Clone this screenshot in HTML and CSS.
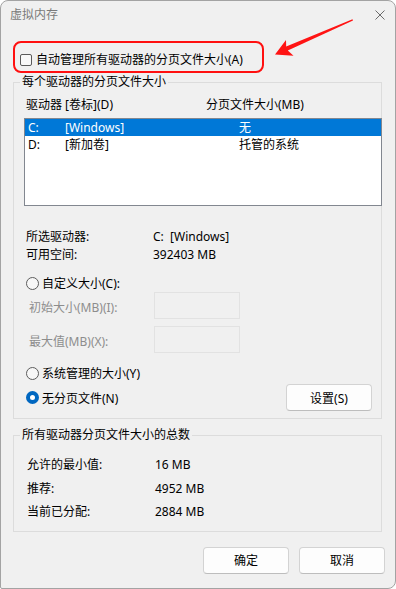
FILE: index.html
```html
<!DOCTYPE html>
<html lang="zh-CN">
<head>
    <meta charset="UTF-8">
    <title>虚拟内存</title>
    <link rel="stylesheet" href="styles.css">
</head>
<body>

    <div class="window">
        <div class="titlebar">
            <span class="title">虚拟内存</span>
            <svg class="close" width="10" height="10" viewBox="0 0 10 10">
                <path d="M0.5 0.5 L9.5 9.5 M9.5 0.5 L0.5 9.5" stroke="#6b6b6b" stroke-width="1" fill="none"/>
            </svg>
        </div>

        <div class="content">
            <div class="highlight">
                <label class="check"><span class="box"></span>自动管理所有驱动器的分页文件大小(A)</label>
            </div>

            <fieldset class="group">
                <legend>每个驱动器的分页文件大小</legend>
                <div class="drives-body">
                    <div class="list-head">
                        <span class="col-drive">驱动器 [卷标](D)</span>
                        <span>分页文件大小(MB)</span>
                    </div>
                    <div class="listbox">
                        <div class="row selected">
                            <span class="c1">C:</span><span class="c2">[Windows]</span><span>无</span>
                        </div>
                        <div class="row">
                            <span class="c1">D:</span><span class="c2">[新加卷]</span><span>托管的系统</span>
                        </div>
                    </div>

                    <div class="info">
                        <div class="kv"><span class="k">所选驱动器:</span><span>C:&nbsp;&nbsp;[Windows]</span></div>
                        <div class="kv"><span class="k">可用空间:</span><span>392403 MB</span></div>
                    </div>

                    <div class="radio custom"><span class="dot"></span>自定义大小(C):</div>
                    <div class="field">
                        <span class="k disabled">初始大小(MB)(I):</span>
                        <span class="input"></span>
                    </div>
                    <div class="field">
                        <span class="k disabled">最大值(MB)(X):</span>
                        <span class="input"></span>
                    </div>
                    <div class="radio system"><span class="dot"></span>系统管理的大小(Y)</div>
                    <div class="last-row">
                        <div class="radio"><span class="dot checked"></span>无分页文件(N)</div>
                        <button type="button">设置(S)</button>
                    </div>
                </div>
            </fieldset>

            <fieldset class="group totals">
                <legend>所有驱动器分页文件大小的总数</legend>
                <div class="totals-body">
                    <div class="kv"><span class="k">允许的最小值:</span><span>16 MB</span></div>
                    <div class="kv"><span class="k">推荐:</span><span>4952 MB</span></div>
                    <div class="kv"><span class="k">当前已分配:</span><span>2884 MB</span></div>
                </div>
            </fieldset>

            <div class="actions">
                <button type="button">确定</button>
                <button type="button">取消</button>
            </div>
        </div>

        <svg class="arrow" width="396" height="589" viewBox="0 0 396 589">
            <polygon points="275,54.5 286,40 286.2,46.6 352.5,19.2 353,20.6 287.8,50.4 293.5,55.8" fill="#ff1414"/>
        </svg>
    </div>

</body>
</html>
```

FILE: styles.css
```css
body {
    margin: 0;
    background-color: #fff;
    font-family: "Noto Sans", "Noto Sans CJK SC", sans-serif;
    font-size: 12px;
    color: #000;
}
.window {
    position: relative;
    width: 396px;
    height: 589px;
    box-sizing: border-box;
    border: 1px solid #a3a3a3;
    border-radius: 8px 8px 8px 2px;
    background-color: #f0f0f0;
    overflow: hidden;
}
.titlebar {
    height: 30px;
    display: flex;
    align-items: center;
    justify-content: space-between;
    padding: 0 10px 2px 9px;
    box-sizing: border-box;
}
.title {
    color: #7a7a7a;
    line-height: 16px;
}
.content {
    padding: 0 13px 0 12px;
}
.highlight {
    width: 251px;
    height: 32px;
    box-sizing: border-box;
    margin-top: 10px;
    padding: 9px 0 0 5px;
    border: 2px solid #ff1010;
    border-radius: 8px;
}
.check {
    display: flex;
    align-items: center;
    line-height: 16px;
}
.box {
    width: 12px;
    height: 12px;
    box-sizing: border-box;
    border: 1px solid #5a5a5a;
    border-radius: 2px;
    background-color: #f8f8f8;
    margin-right: 4px;
}
.group {
    margin: 1px 0 0 0;
    padding: 0;
    border: 1px solid #dcdcdc;
    min-width: 0;
}
.group legend {
    margin-left: 6px;
    padding: 0 2px;
    line-height: 16px;
}
.drives-body {
    padding: 7px 0 7px 10px;
}
.list-head {
    display: flex;
    padding-left: 2px;
    line-height: 16px;
}
.col-drive {
    width: 180px;
}
.listbox {
    margin-top: 5px;
    margin-right: -1px;
    height: 88px;
    box-sizing: border-box;
    border: 1px solid #828790;
    background-color: #fff;
}
.row {
    display: flex;
    height: 17px;
    line-height: 17px;
    padding-left: 3px;
}
.row.selected {
    background-color: #0078d7;
    color: #fff;
}
.c1 {
    width: 37px;
}
.c2 {
    width: 174px;
}
.info {
    margin-top: 22px;
    padding-left: 2px;
}
.kv {
    display: flex;
    line-height: 18px;
}
.info .k {
    width: 127px;
}
.radio {
    display: flex;
    align-items: center;
    height: 18px;
    padding-left: 2px;
}
.radio.custom {
    margin-top: 10px;
}
.radio.system {
    margin-top: 11px;
}
.dot {
    width: 13px;
    height: 13px;
    box-sizing: border-box;
    border: 1px solid #5c5c5c;
    border-radius: 50%;
    background-color: #f7f7f7;
    margin-right: 3px;
}
.dot.checked {
    border: 4px solid #0067c0;
    background-color: #fff;
}
.field {
    display: flex;
    align-items: center;
    height: 27px;
    padding-left: 5px;
}
.field + .field {
    margin-top: 7px;
}
.field .k {
    width: 125px;
    padding-top: 2px;
}
.disabled {
    color: #8d8d8d;
}
.input {
    width: 86px;
    height: 27px;
    box-sizing: border-box;
    border: 1px solid #e2e2e2;
    background-color: #f0f0f0;
}
.last-row {
    display: flex;
    align-items: center;
    justify-content: space-between;
    height: 27px;
    margin-top: 2px;
    padding-right: 9px;
}
button {
    width: 86px;
    height: 27px;
    padding: 0;
    font-family: inherit;
    font-size: 12px;
    color: #000;
    background-color: #fdfdfd;
    border: 1px solid #d3d3d3;
    border-bottom-color: #bdbdbd;
    border-radius: 4px;
}
.totals {
    margin-top: 8px;
}
.totals-body {
    padding: 10px 0 7px 13px;
}
.totals-body .kv {
    line-height: 23.5px;
}
.totals-body .k {
    width: 128px;
}
.actions {
    display: flex;
    justify-content: flex-end;
    gap: 10px;
    margin: 15px -3px 0 0;
}
.arrow {
    position: absolute;
    left: -1px;
    top: -1px;
    pointer-events: none;
}
```
